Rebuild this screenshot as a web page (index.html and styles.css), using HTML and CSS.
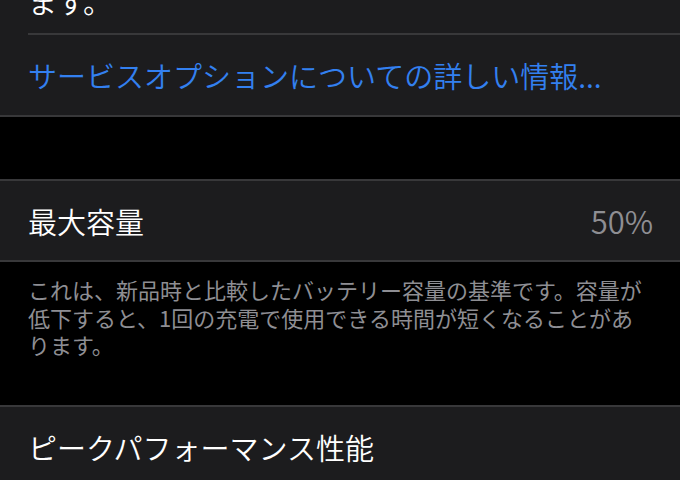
FILE: index.html
```html
<!DOCTYPE html>
<html lang="ja">
<head>
    <meta charset="UTF-8">
    <meta name="viewport" content="width=device-width, initial-scale=1.0">
    <title>バッテリーの状態</title>
    <link rel="stylesheet" href="styles.css">
</head>
<body>
    <div class="group">
        <p class="group-text">ます。</p>
        <div class="separator"></div>
        <div class="cell link-cell">サービスオプションについての詳しい情報...</div>
    </div>

    <div class="spacer"></div>

    <div class="group">
        <div class="cell value-cell">
            <span class="label">最大容量</span>
            <span class="value">50%</span>
        </div>
    </div>

    <p class="footnote">これは、新品時と比較したバッテリー容量の基準です。容量が低下すると、1回の充電で使用できる時間が短くなることがあります。</p>

    <div class="group">
        <div class="cell">
            <span class="label">ピークパフォーマンス性能</span>
        </div>
    </div>
</body>
</html>
```

FILE: styles.css
```css
* {
    margin: 0;
    padding: 0;
    box-sizing: border-box;
}

body {
    font-family: "Noto Sans CJK JP", "Noto Sans", sans-serif;
    background-color: #000000;
    color: #FFFFFF;
    width: 680px;
    height: 480px;
    overflow: hidden;
}

.group {
    background-color: #1C1C1E;
    border-top: 2px solid #38383A;
    border-bottom: 2px solid #38383A;
}

.group:first-child {
    border-top: none;
}

.group-text {
    font-size: 29px;
    font-weight: 350;
    line-height: 34px;
    padding-left: 28px;
    margin-top: -16px;
    height: 49px;
}

.separator {
    height: 2px;
    margin-left: 28px;
    background-color: #38383A;
}

.cell {
    display: flex;
    align-items: center;
    justify-content: space-between;
    padding: 0 27px 0 28px;
    height: 79px;
    font-size: 29px;
    font-weight: 350;
}

.link-cell {
    height: 80px;
    color: #3380F0;
}

.value {
    color: #8E8E93;
    font-size: 31px;
}

.spacer {
    height: 62px;
}

.footnote {
    height: 143px;
    padding: 14px 28px 0 28px;
    font-size: 22px;
    line-height: 27.5px;
    color: #8E8E93;
}
```
